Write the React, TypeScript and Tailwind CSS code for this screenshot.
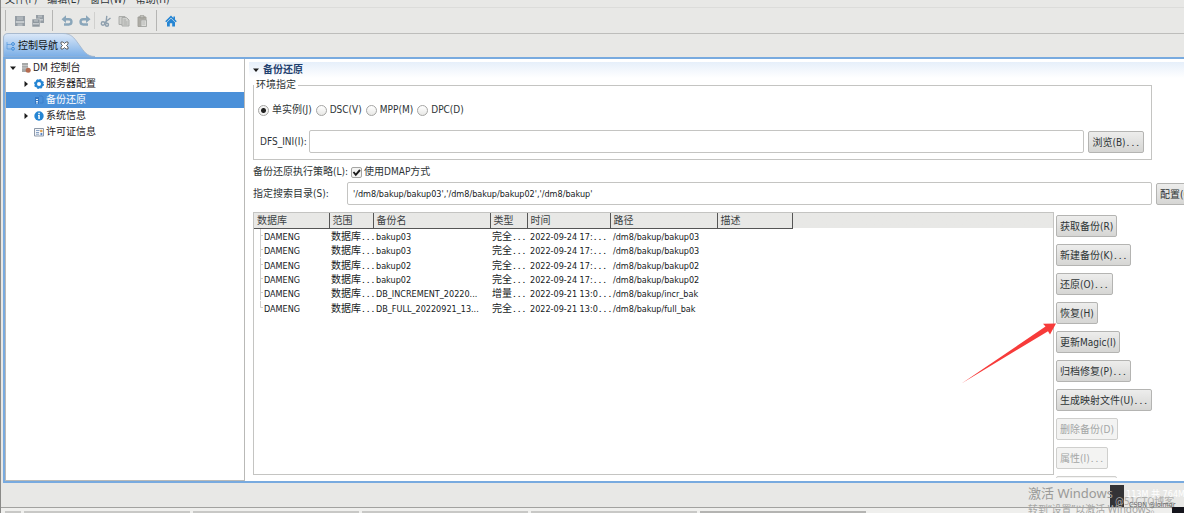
import { useState } from "react";
import type { ReactNode } from "react";

const text =
  "font-['DejaVu_Sans_Condensed','Noto_Sans_CJK_SC',sans-serif] text-[10px] leading-[14px]";

const menus = ["文件(F)", "编辑(E)", "窗口(W)", "帮助(H)"];

const backups = [
  ["DAMENG", "数据库...", "bakup03", "完全...", "2022-09-24 17:...", "/dm8/bakup/bakup03"],
  ["DAMENG", "数据库...", "bakup03", "完全...", "2022-09-24 17:...", "/dm8/bakup/bakup03"],
  ["DAMENG", "数据库...", "bakup02", "完全...", "2022-09-24 17:...", "/dm8/bakup/bakup02"],
  ["DAMENG", "数据库...", "bakup02", "完全...", "2022-09-24 17:...", "/dm8/bakup/bakup02"],
  ["DAMENG", "数据库...", "DB_INCREMENT_20220...", "增量...", "2022-09-21 13:0...", "/dm8/bakup/incr_bak"],
  ["DAMENG", "数据库...", "DB_FULL_20220921_13...", "完全...", "2022-09-21 13:0...", "/dm8/bakup/full_bak"],
];

const headers = ["数据库", "范围", "备份名", "类型", "时间", "路径", "描述"];

const cellStyles = [
  "pl-[6px] text-[9px]",
  "pt-[2px] pl-[2px]",
  "pt-[2px] pl-[3px] text-[9px]",
  "pt-[2px] pl-[2px]",
  "pt-[2px] pl-[3px] text-[9px]",
  "pt-[2px] pl-[3px] text-[9px]",
];

const actions = [
  { label: "获取备份(R)" },
  { label: "新建备份(K)..." },
  { label: "还原(O)..." },
  { label: "恢复(H)" },
  { label: "更新Magic(I)" },
  { label: "归档修复(P)..." },
  { label: "生成映射文件(U)..." },
  { label: "删除备份(D)", disabled: true },
  { label: "属性(I)...", disabled: true },
  { label: "导出备份(E)", disabled: true },
];

/** Sets a trailing ellipsis in the wider fixed-pitch dots. */
function Dotted({ children }: { children: string }) {
  if (!children.endsWith("...")) return <>{children}</>;
  return (
    <>
      {children.slice(0, -3)}
      <span className="font-['Liberation_Mono',monospace] text-[8px] leading-none font-bold">...</span>
    </>
  );
}

function Button({ children, disabled }: { children: string; disabled?: boolean }) {
  return (
    <button
      type="button"
      disabled={disabled}
      className="h-[22px] shrink-0 rounded-xs border border-[#b4b4b2] bg-linear-to-b from-[#ededec] to-[#d6d6d4] px-[3px] pt-[2px] whitespace-nowrap text-[#2e3436] disabled:border-[#cfcfcd] disabled:bg-none disabled:bg-[#f3f3f2] disabled:text-[#a3a6a6]"
    >
      <Dotted>{children}</Dotted>
    </button>
  );
}

function Save() {
  return (
    <svg viewBox="0 0 12 12" className="size-3">
      <path d="M1 1h10v10H1z" fill="#959da4" />
      <path d="M3 1.500h6v3.500H3z" fill="#aeb5ba" />
      <path d="M1.800 6h8.400v2H1.800z" fill="#c6cbce" />
      <path d="M3.500 8.500h5V11h-5z" fill="#b4babf" />
    </svg>
  );
}

function SaveAll() {
  return (
    <svg viewBox="0 0 12 12" className="size-3">
      <path d="M4 0h8v8H4z" fill="#959da4" />
      <path d="M6 .5h4v2H6z" fill="#b4babf" />
      <path d="M5 4h6v1.500H5z" fill="#c6cbce" />
      <path d="M0 4h8v8H0z" fill="#8f989f" stroke="#e8e8e6" strokeWidth=".6" />
      <path d="M2 4.800h4v2H2z" fill="#aeb5ba" />
      <path d="M1 8h6v1.500H1z" fill="#c6cbce" />
    </svg>
  );
}

function Undo({ flip }: { flip?: boolean }) {
  return (
    <svg viewBox="0 0 12 12" className={flip ? "size-3 -scale-x-100" : "size-3"}>
      <path d="M4 4.200h3.800a2.600 2.600 0 0 1 0 5.300H3" fill="none" stroke="#8aa6ba" strokeWidth="2.400" />
      <path d="M.5 4.200 5 .3v7.800z" fill="#8aa6ba" />
    </svg>
  );
}

function Cut() {
  return (
    <svg viewBox="0 0 12 12" className="size-3" fill="none" stroke="#8fa0ae" strokeWidth="1.400">
      <path d="M6.800.8 6 8M10.500 3 4.500 7.800" />
      <circle cx="3" cy="8.500" r="1.700" />
      <circle cx="7" cy="9.800" r="1.500" />
    </svg>
  );
}

function Copy() {
  return (
    <svg viewBox="0 0 12 12" className="size-3" fill="#cfd0cd" stroke="#a5a7a5" strokeWidth=".9">
      <path d="M1 1.500h6v8H1z" />
      <path d="M4 2.500h4.500L11 5v6H4z" />
      <path d="M5.500 5h2.500M5.500 7h4M5.500 9h4" />
    </svg>
  );
}

function Paste() {
  return (
    <svg viewBox="0 0 12 12" className="size-3" strokeWidth=".9">
      <path d="M2 2h8v9.500H2z" fill="#aeaca5" stroke="#a09f99" />
      <path d="M4 .8h4v2H4z" fill="#d0d0cc" stroke="#96968f" />
      <path d="M5 5h5.500v6.500H5z" fill="#dcdcd9" stroke="#a5a7a5" />
      <path d="M6.200 7h3M6.200 9h3" stroke="#b0b2b0" />
    </svg>
  );
}

function Home() {
  return (
    <svg viewBox="0 0 12 12" className="size-3" fill="#2585d3">
      <path d="M6 .5.200 6.300l1.100 1L6 2.700l4.700 4.600 1.100-1L10 4.500V1.400H8.400v1.500z" />
      <path d="M2 7.300 6 3.500l4 3.800v4.200H7.200V8.200H4.800v3.300H2z" />
    </svg>
  );
}

function Tool({ name, children }: { name: string; children: ReactNode }) {
  return (
    <button type="button" aria-label={name} className="flex w-[18px] justify-center">
      {children}
    </button>
  );
}

function Separator() {
  return <span className="h-[21px] w-px bg-[#b5b5b3]" />;
}

function Triangle({ open }: { open?: boolean }) {
  return (
    <svg viewBox="0 0 6 6" className="size-[6px] shrink-0" fill="#1c1c1c">
      {open ? <path d="M0 1.500h6L3 5z" /> : <path d="M1.500 0v6L5 3z" />}
    </svg>
  );
}

function TreeRow({
  label,
  icon,
  open,
  leaf,
  root,
  selected,
}: {
  label: string;
  icon: ReactNode;
  open?: boolean;
  leaf?: boolean;
  root?: boolean;
  selected?: boolean;
}) {
  return (
    <li
      className={`flex h-4 items-center ${root ? "pl-1" : "pl-[17px]"} ${
        selected ? "bg-[#4a90d9] text-white" : "text-[#1e2224]"
      }`}
    >
      <span className="flex w-[11px] shrink-0">{!leaf && <Triangle open={open} />}</span>
      <span className="mr-[2px] flex w-[10px] shrink-0">{icon}</span>
      {label}
    </li>
  );
}

function Radio({ label, checked, onChange }: { label: string; checked: boolean; onChange: () => void }) {
  return (
    <label className="flex items-center gap-[3px]">
      <input
        type="radio"
        name="instance"
        checked={checked}
        onChange={onChange}
        className="size-[11px] appearance-none rounded-full border border-[#a5a5a3] bg-linear-to-b from-white to-[#e8e8e6] checked:bg-[radial-gradient(circle,#222_2px,#f4f4f3_3px)]"
      />
      {label}
    </label>
  );
}

function Sidebar() {
  return (
    <nav className="w-60 shrink-0 border border-t-0 border-[#b9b9b7] bg-white pt-px">
      <ul>
        <TreeRow
          root
          open
          label="DM 控制台"
          icon={
            <svg viewBox="0 0 10 10" className="size-[10px]">
              <path d="M1 0h6v9H1z" fill="#a7a9a9" />
              <path d="M1 2.500h6M1 5h6" stroke="#dcdcdc" strokeWidth=".6" />
              <circle cx="7.200" cy="7.300" r="2.500" fill="#b56b50" />
            </svg>
          }
        />
        <TreeRow
          label="服务器配置"
          icon={
            <svg viewBox="0 0 10 10" className="size-[10px]" fill="none" stroke="#2585d3">
              <circle cx="5" cy="5" r="3.200" strokeWidth="2.400" />
              <circle cx="5" cy="5" r="4.400" strokeWidth="1.200" strokeDasharray="1.800 1.650" />
            </svg>
          }
        />
        <TreeRow
          leaf
          selected
          label="备份还原"
          icon={
            <svg viewBox="0 0 10 10" className="size-[10px]">
              <path d="M1 2h4v7H1z" fill="#3478c4" />
              <path d="M5 1h3l1 1.500V8H6" fill="none" stroke="#3d80cc" />
              <path d="M2 4h2v1H2zM2 6h2v1H2zM2 7.500h2v1H2z" fill="#e3effb" />
            </svg>
          }
        />
        <TreeRow
          label="系统信息"
          icon={
            <svg viewBox="0 0 10 10" className="size-[10px]">
              <circle cx="5" cy="5" r="4.700" fill="#2585d3" />
              <path d="M4.300 1.700h1.500v1.500H4.300zM4 4h1.800v4H4.300V5H4z" fill="#fff" />
            </svg>
          }
        />
        <TreeRow
          leaf
          label="许可证信息"
          icon={
            <svg viewBox="0 0 10 10" className="size-[10px]">
              <path d="M.5 1.500h9v7.500h-9z" fill="#f4f6f9" stroke="#8e99a8" />
              <path d="M2 3.500h3.500M2 5.500h3M2 7.200h3" stroke="#6f8db5" strokeWidth=".8" />
              <circle cx="7.300" cy="4" r="1.300" fill="#e0a04c" />
              <path d="M6.500 6h1.800v2.200H6.500z" fill="#5a86c4" />
            </svg>
          }
        />
      </ul>
    </nav>
  );
}

function BackupTable() {
  return (
    <div className="mb-[3px] min-w-0 flex-1 overflow-hidden border border-[#c4c4c2] bg-linear-to-b from-[#e8e8e6] from-[15px] to-white to-[15px]">
      <table className="h-[102px] w-[538px] table-fixed border-collapse text-left">
        <colgroup>
          <col className="w-[75px]" />
          <col className="w-[44px]" />
          <col className="w-[117px]" />
          <col className="w-[37px]" />
          <col className="w-[83px]" />
          <col className="w-[107px]" />
          <col className="w-[75px]" />
        </colgroup>
        <thead>
          <tr className="h-[15px]">
            {headers.map((h) => (
              <th
                key={h}
                className="border-r border-b border-[#555] pt-[2px] pr-0 pb-0 pl-[3px] leading-[12px] font-normal text-[#3c4143]"
              >
                {h}
              </th>
            ))}
          </tr>
        </thead>
        <tbody className="text-[#161a1c]">
          {backups.map((row, i) => (
            <tr key={i}>
              {row.map((cell, j) => (
                <td key={j} className={`leading-[12px] whitespace-nowrap ${cellStyles[j]}`}>
                  {j === 0 ? (
                    <span className="flex items-center gap-px">
                      <svg viewBox="0 0 3 14" className="h-[14px] w-[3px]" stroke="#cfcfcd">
                        <path d={i < backups.length - 1 ? "M.5 0v14M.5 6.500h2.500" : "M.5 0v6.500h2.500"} fill="none" />
                      </svg>
                      <span className="pt-[2px]">{cell}</span>
                    </span>
                  ) : j === 2 ? (
                    cell
                  ) : (
                    <Dotted>{cell}</Dotted>
                  )}
                </td>
              ))}
              <td className="p-0" />
            </tr>
          ))}
        </tbody>
      </table>
    </div>
  );
}

function BackupPanel() {
  const [mode, setMode] = useState("单实例(J)");
  const [dmap, setDmap] = useState(true);
  const [ini, setIni] = useState("");
  const [dir, setDir] = useState("'/dm8/bakup/bakup03','/dm8/bakup/bakup02','/dm8/bakup'");

  return (
    <main className="flex min-w-0 flex-1 flex-col overflow-hidden bg-white pt-[3px] pl-1 text-[#2e3436]">
      <h1 className="flex h-4 shrink-0 items-center gap-1 bg-linear-to-b from-[#e6effa] to-white pl-1 font-bold text-[#1f3f6e]">
        <Triangle open />
        备份还原
      </h1>

      <div className="flex min-h-0 flex-1 flex-col pb-[3px] pl-1">
        <fieldset className="mr-8 h-[82px] shrink-0 border border-[#c4c4c2] pr-[7px] pl-1">
          <legend className="-ml-1 px-[2px]">环境指定</legend>
          <div className="mt-[10px] flex h-4 items-center gap-1">
            {["单实例(J)", "DSC(V)", "MPP(M)", "DPC(D)"].map((m) => (
              <Radio key={m} label={m} checked={mode === m} onChange={() => setMode(m)} />
            ))}
          </div>
          <div className="mt-3 flex items-center gap-1">
            <label htmlFor="ini" className="w-[47px] pl-[2px] whitespace-nowrap">
              DFS_INI(I):
            </label>
            <input
              id="ini"
              value={ini}
              onChange={(e) => setIni(e.target.value)}
              className="h-[23px] min-w-0 flex-1 rounded-xs border border-[#c4c4c2] bg-white px-[6px]"
            />
            <Button>浏览(B)...</Button>
          </div>
        </fieldset>

        <div className="mt-1 flex h-4 shrink-0 items-center gap-[3px]">
          <span>备份还原执行策略(L):</span>
          <label className="flex items-center gap-[2px]">
            <span className="relative flex">
              <input
                type="checkbox"
                checked={dmap}
                onChange={() => setDmap(!dmap)}
                className="size-[11px] appearance-none rounded-xs border border-[#a5a5a3] bg-[#f4f4f3]"
              />
              {dmap && (
                <svg viewBox="0 0 11 11" className="pointer-events-none absolute inset-0 size-[11px]">
                  <path d="m2.500 5 2.300 2.800L9 3" fill="none" stroke="#1c1c1c" strokeWidth="1.900" />
                </svg>
              )}
            </span>
            使用DMAP方式
          </label>
        </div>

        <div className="mt-[2px] flex shrink-0 items-center gap-1">
          <label htmlFor="dir" className="w-[90px] shrink-0">
            指定搜索目录(S):
          </label>
          <input
            id="dir"
            value={dir}
            onChange={(e) => setDir(e.target.value)}
            className="h-[23px] min-w-0 flex-1 rounded-xs border border-[#c4c4c2] bg-white px-[5px] text-[9px] text-[#161a1c]"
          />
          <div className="flex w-7 shrink-0 overflow-hidden">
            <Button>配置(C)...</Button>
          </div>
        </div>

        <div className="mt-[7px] flex min-h-0 flex-1 gap-[2px]">
          <BackupTable />
          <div className="flex w-32 shrink-0 flex-col items-start gap-[7px] overflow-hidden pt-[3px]">
            {actions.map((a) => (
              <Button key={a.label} disabled={a.disabled}>
                {a.label}
              </Button>
            ))}
          </div>
        </div>
      </div>
    </main>
  );
}

export default function App() {
  return (
    <div className={`relative flex h-screen flex-col overflow-hidden border-l border-[#8a8a88] bg-[#e8e8e6] ${text}`}>
      <div className="flex h-[7px] shrink-0 items-end gap-[10px] overflow-hidden pl-1 text-[#2e3436]">
        {menus.map((m) => (
          <span key={m}>{m}</span>
        ))}
      </div>

      <div className="flex h-[26px] shrink-0 items-center border-t border-[#dcdcda] pl-1">
        <Separator />
        <div className="flex px-[5px]">
          <Tool name="保存"><Save /></Tool>
          <Tool name="全部保存"><SaveAll /></Tool>
        </div>
        <Separator />
        <div className="flex pl-[5px]">
          <Tool name="撤销"><Undo /></Tool>
          <Tool name="重做"><Undo flip /></Tool>
        </div>
        <span className="h-[17px] w-px bg-[#d0d0ce]" />
        <div className="flex pr-[5px] pl-[2px]">
          <Tool name="剪切"><Cut /></Tool>
          <Tool name="复制"><Copy /></Tool>
          <Tool name="粘贴"><Paste /></Tool>
        </div>
        <Separator />
        <div className="flex pl-[5px]">
          <Tool name="主页"><Home /></Tool>
        </div>
      </div>

      <div className="relative ml-[2px] h-6 shrink-0 rounded-tl-md border-t border-l border-[#bdbdbb]">
        <svg viewBox="0 0 92 24" className="absolute -top-px -left-px h-6 w-[92px]">
          <defs>
            <linearGradient id="tab" x1="0" y1="0" x2="0" y2="1">
              <stop offset="0" stopColor="#dbe8f8" />
              <stop offset="1" stopColor="#79ade6" />
            </linearGradient>
          </defs>
          <path d="M.5 24V5Q.5.5 5 .5h55c8 0 11 4 16 11s8 12 16 12V24z" fill="url(#tab)" stroke="#9fb4cc" strokeWidth=".8" />
        </svg>
        <div className="relative flex h-full items-center pl-[2px]">
          <svg viewBox="0 0 10 10" className="mr-[2px] size-[10px]" fill="none" stroke="#3d8ad8">
            <path d="M1 1v7h4M1 3.500h4" strokeWidth=".9" opacity=".6" />
            <circle cx="7" cy="3" r="1.400" />
            <circle cx="7" cy="7.800" r="1.400" />
          </svg>
          <span className="text-[#101315]">控制导航</span>
          <button type="button" aria-label="关闭" className="ml-[2px]">
            <svg viewBox="0 0 9 9" className="size-[9px]" fill="#fff" stroke="#444" strokeWidth=".8">
              <path d="M1 1h2l1.500 1.500L6 1h2v2L6.500 4.500 8 6v2H6L4.500 6.500 3 8H1V6l1.500-1.500L1 3z" />
            </svg>
          </button>
        </div>
      </div>

      <div className="ml-[2px] flex min-h-0 flex-1 border-t-2 border-b-2 border-l-2 border-[#78aadf] bg-[#f0f0ef]">
        <Sidebar />
        <BackupPanel />
      </div>

      <div className="h-[25px] shrink-0 border-b border-[#a2a2a0]" />
      <div className="flex h-[5px] shrink-0 items-end gap-[3px] bg-[#efefed] pl-1">
        <span className="h-[2px] w-4 bg-[#c8c8c6]" />
        <span className="h-[2px] w-[166px] bg-[#c8c8c6]" />
        <span className="h-[2px] w-[166px] bg-[#c8c8c6]" />
        <span className="h-[2px] w-[166px] bg-[#c8c8c6]" />
        <span className="h-[2px] w-[166px] bg-[#c8c8c6]" />
        <span className="h-[2px] w-[166px] bg-[#b4b4b2]" />
      </div>

      <svg viewBox="0 0 96 62" className="pointer-events-none absolute top-[323px] right-[127px] h-[62px] w-24">
        <path d="M.5 60.500 84.500 3.500 82 .8 95 .5 89 11.500 87 8.200z" fill="#f73b3a" />
      </svg>

      <div className="pointer-events-none absolute right-0 bottom-0 h-7 w-40 overflow-hidden whitespace-nowrap">
        <span className="absolute top-0 left-[86px] h-[22px] w-[14px] bg-[#333336]" />
        <span className="absolute top-[22px] right-0 h-[6px] w-3 bg-[#14141c]" />
        <span className="absolute top-0 left-1 font-['Noto_Sans','Noto_Sans_CJK_SC',sans-serif] text-[13px] leading-[17px] text-[#9a9a98]">激活 Windows</span>
        <span className="absolute top-[17px] left-1 font-['Noto_Sans','Noto_Sans_CJK_SC',sans-serif] text-[#a5a5a3]">转到“设置”以激活 Windows。</span>
        <span className="absolute top-[10px] left-[91px] text-[#b0b0ae]">@51CTO博客</span>
        <span className="absolute top-[2px] left-[102px] text-[9px] text-white">113M 共 764M</span>
        <span className="absolute top-[13px] left-[105px] text-[7px] text-[#666]">CSDN @lolmqr</span>
      </div>
    </div>
  );
}
